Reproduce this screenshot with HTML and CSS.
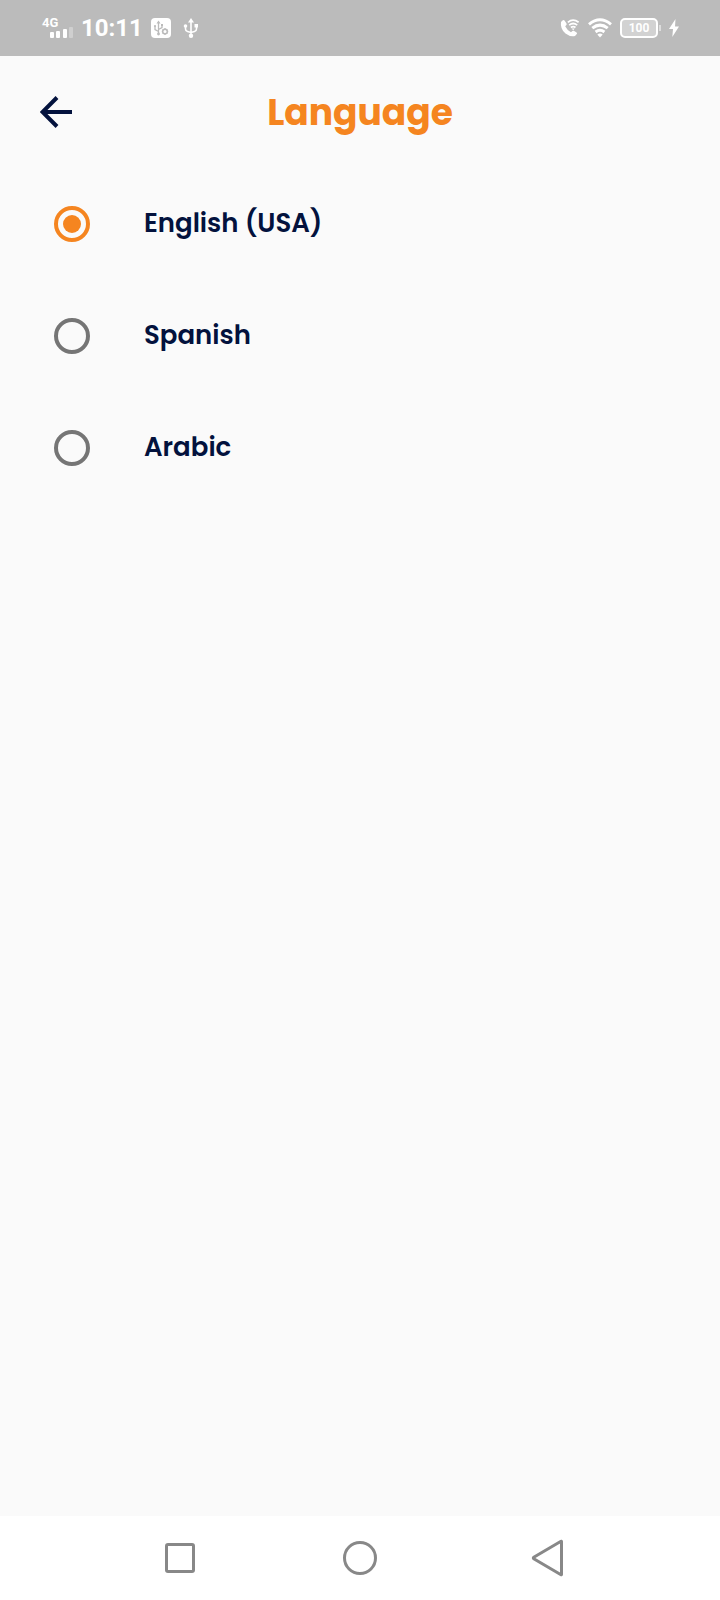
FILE: index.html
```html
<!DOCTYPE html>
<html lang="en">
<head>
<meta charset="utf-8">
<meta name="viewport" content="width=device-width, initial-scale=1">
<title>Language</title>
<link rel="stylesheet" href="styles.css">
</head>
<body>
<div class="status">
  <div class="status-group">
    <svg class="signal" width="32" height="24" viewBox="0 0 32 24" fill="#fff">
      <text class="network" x="1" y="11">4G</text>
      <rect x="9" y="16" width="4" height="6" rx="1"/>
      <rect x="15" y="15" width="4" height="7" rx="1"/>
      <rect x="22" y="13" width="4" height="9" rx="1"/>
      <rect x="28" y="11" width="4" height="11" rx="1" opacity=".3"/>
    </svg>
    <span class="time">10:11</span>
    <svg width="20" height="20" viewBox="0 0 20 20" fill="none" stroke="#bbb" stroke-width="1.3">
      <rect width="20" height="20" rx="4" fill="#fff" stroke="none"/>
      <path d="M7.5 16V4M4 8v3.5l3.5 2M11 7v2.500l-3.500 2"/>
      <path d="M7.500 2.500l2 3h-4z" fill="#bbb" stroke="none"/>
      <circle cx="4" cy="8" r="1.100" fill="#bbb" stroke="none"/>
      <circle cx="7.500" cy="16" r="1.400" fill="#bbb" stroke="none"/>
      <rect x="10" y="6" width="2" height="2" fill="#bbb" stroke="none"/>
      <circle cx="14" cy="13.500" r="2.300" stroke-width="1.500"/>
      <path d="M14 10v1M14 16v1M10.800 13.500h1M16.200 13.500h1M11.700 11.200l.8.8M15.500 15l.8.8M16.300 11.200l-.8.8M12.500 15l-.8.8"/>
    </svg>
    <svg class="usb" width="16" height="20" viewBox="0 0 16 20" fill="none" stroke="#fff" stroke-width="1.6">
      <path d="M8 17V3M2.500 8v3q0 2 2 2.500L8 14.500l3.500-1q2-.5 2-2.500V8"/>
      <path d="M8 0l3 4.500H5z" fill="#fff" stroke="none"/>
      <circle cx="8" cy="17.700" r="2.200" fill="#fff" stroke="none"/>
      <circle cx="2.500" cy="8" r="1.800" fill="#fff" stroke="none"/>
      <path d="M11.500 6H15v3.500h-3.500z" fill="#fff" stroke="none"/>
    </svg>
  </div>
  <div class="status-group">
    <svg width="20" height="20" viewBox="0 0 20 20" fill="none" stroke="#fff">
      <path d="M2.500 2.500L1 4q-1 7 4.500 11.500Q10 19 15 18l1.800-2q.6-.8-.2-1.400l-2.800-1.800q-.8-.4-1.400.2L11 14.300Q7 12 5.200 8.200l1.200-1.300q.5-.6.1-1.300L4.700 2.700q-.8-1.200-2.200-.2z" fill="#fff" stroke="none"/>
      <path d="M7.800 4.300q5.300-4.200 10.800 0M9.200 7.100q4-3.200 8 0M10.900 9.500q2.300-1.800 4.600 0" stroke-width="1.700"/>
      <path d="M11.700 10.500h3L13.200 12.200z" fill="#fff" stroke="none"/>
    </svg>
    <svg width="24" height="20" viewBox="0 0 24 20" fill="none" stroke="#fff" stroke-width="3">
      <path d="M1 6.300q11-9 22 0M4.300 10.200q7.700-6.200 15.400 0M7.600 14q4.400-3.400 8.800 0"/>
      <path d="M9.300 16.500q2.700-2 5.400 0L12 19.500z" fill="#fff" stroke="none"/>
    </svg>
    <div class="battery"><span class="battery-level">100</span></div>
    <svg width="10" height="20" viewBox="0 0 10 20" fill="#fff"><path d="M6.500 1L0 11h4L3.300 19 10 8.500H6z"/></svg>
  </div>
</div>
<header class="header">
  <button class="back" aria-label="Back">
    <svg width="32" height="32" viewBox="0 0 32 32" fill="none" stroke="#03123d" stroke-width="4"><path d="M32 16H3M17 1.500L2.500 16 17 30.500"/></svg>
  </button>
  <h1 class="title">Language</h1>
</header>
<main class="options">
  <label class="option"><input class="radio" type="radio" name="language" checked><span class="option-name">English (USA)</span></label>
  <label class="option"><input class="radio" type="radio" name="language"><span class="option-name">Spanish</span></label>
  <label class="option"><input class="radio" type="radio" name="language"><span class="option-name">Arabic</span></label>
</main>
<nav class="nav">
  <button class="nav-button" aria-label="Recent apps"><svg width="50" height="40" viewBox="0 0 50 40"><rect x="11.500" y="6.500" width="27" height="27" rx="1.500"/></svg></button>
  <button class="nav-button" aria-label="Home"><svg width="50" height="40" viewBox="0 0 50 40"><circle cx="25" cy="20" r="15.500"/></svg></button>
  <button class="nav-button" aria-label="Go back"><svg width="50" height="40" viewBox="0 0 50 40"><path d="M46.500 3.500v33q0 .5-.5.2L18.800 20.800q-1-.8 0-1.600L46 3.300q.5-.3.5.2z"/></svg></button>
</nav>
</body>
</html>
```
FILE: styles.css
```css
* {
  box-sizing: border-box;
}

body {
  margin: 0;
  min-height: 100vh;
  display: flex;
  flex-direction: column;
  background: #fafafa;
  color: #03123d;
  font-family: Poppins, Inter, "Open Sans", sans-serif;
}

button {
  padding: 0;
  border: 0;
  background: none;
}

svg {
  display: block;
  flex: none;
}

.status {
  display: flex;
  justify-content: space-between;
  height: 56px;
  padding: 0 41px;
  background: #bbb;
  color: #fff;
  font-family: Roboto, sans-serif;
}

.status-group {
  display: flex;
  align-items: center;
  gap: 8px;
}

.signal {
  overflow: visible;
}

.network {
  font-size: 13px;
  font-weight: 700;
}

.time {
  font-size: 24px;
  font-weight: 700;
}

.usb {
  margin-left: 4px;
}

.battery {
  display: flex;
  align-items: center;
}

.battery::after {
  content: "";
  width: 2px;
  height: 6px;
  margin-left: 1px;
  background: #ddd;
}

.battery-level {
  width: 38px;
  height: 20px;
  border: 2px solid #fff;
  border-radius: 5px;
  background: #d2d2d2;
  font-size: 12px;
  font-weight: 700;
  line-height: 16px;
  text-align: center;
}

.header {
  display: grid;
  grid-template-columns: 32px 1fr 32px;
  align-items: center;
  height: 112px;
  padding: 0 40px;
}

.title {
  margin: 0;
  padding-top: 2px;
  color: #f58520;
  font-size: 36px;
  font-weight: 700;
  line-height: 48px;
  text-align: center;
}

.options {
  flex: 1;
}

.option {
  display: flex;
  align-items: center;
  gap: 54px;
  height: 112px;
  padding: 0 54px;
  font-size: 26px;
  font-weight: 600;
}

.option-name {
  padding-bottom: 2px;
}

.radio {
  appearance: none;
  display: grid;
  place-items: center;
  width: 36px;
  height: 36px;
  margin: 0;
  border: 4px solid #757575;
  border-radius: 50%;
}

.radio:checked {
  border-color: #f58520;
}

.radio:checked::before {
  content: "";
  width: 18px;
  height: 18px;
  border-radius: 50%;
  background: #f58520;
}

.nav {
  display: grid;
  grid-template-columns: repeat(3, 1fr);
  height: 84px;
  padding: 0 12.5%;
  background: #fff;
}

.nav-button {
  display: grid;
  place-items: center;
}

.nav-button svg {
  fill: none;
  stroke: #888;
  stroke-width: 3;
}
```
